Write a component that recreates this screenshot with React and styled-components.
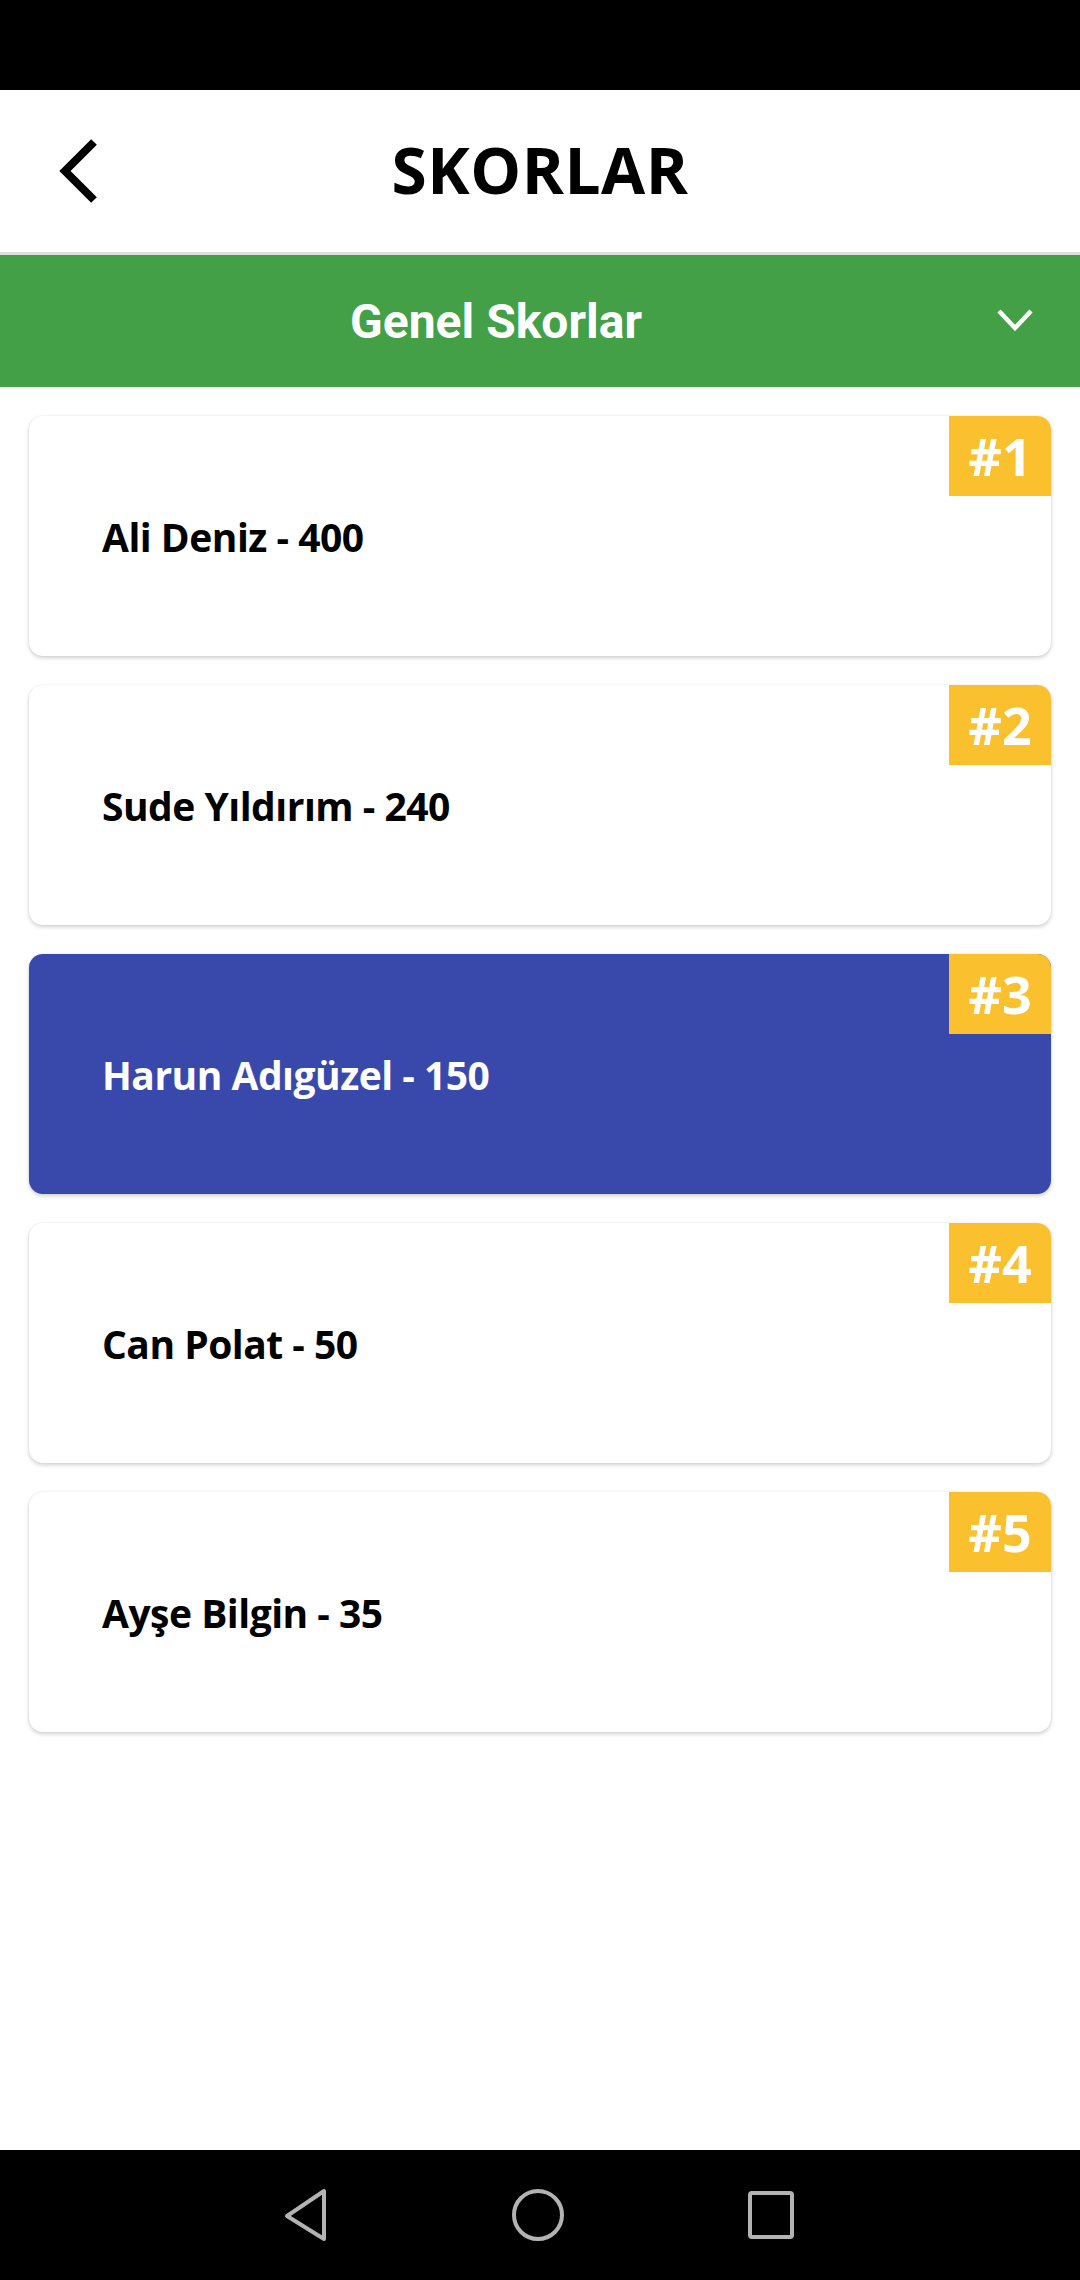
import React from 'react';
import styled, { createGlobalStyle } from 'styled-components';

const GlobalStyle = createGlobalStyle`
  html, body {
    margin: 0;
    padding: 0;
    background: #ffffff;
  }
`;

const Screen = styled.div`
  height: 100vh;
  display: flex;
  flex-direction: column;
  background: #ffffff;
`;

const StatusBar = styled.div`
  height: 90px;
  background: #000000;
  flex-shrink: 0;
`;

const Header = styled.header`
  height: 162px;
  display: grid;
  grid-template-columns: 150px 1fr 150px;
  align-items: center;
  background: #ffffff;
  border-bottom: 3px solid #dedede;
  flex-shrink: 0;
`;

const BackButton = styled.button`
  background: none;
  border: none;
  padding: 0 0 0 56px;
  display: flex;
  align-items: center;
  height: 100%;
`;

const Title = styled.h1`
  margin: 0;
  text-align: center;
  font-family: 'Open Sans', sans-serif;
  font-weight: 700;
  font-size: 64px;
  letter-spacing: 0.5px;
  color: #000000;
  padding-bottom: 4px;
`;

const Dropdown = styled.div`
  height: 132px;
  background: #43a047;
  display: flex;
  align-items: center;
  position: relative;
  flex-shrink: 0;
`;

const DropdownLabel = styled.span`
  flex: 1;
  text-align: center;
  padding-right: 88px;
  font-family: Roboto, sans-serif;
  font-weight: 700;
  font-size: 48px;
  color: #ffffff;
`;

const Chevron = styled.svg`
  position: absolute;
  right: 46px;
  top: 52px;
`;

const List = styled.main`
  flex: 1;
  display: flex;
  flex-direction: column;
  gap: 29px;
  padding: 29px 29px 0 29px;
`;

const Card = styled.div`
  position: relative;
  height: 240px;
  border-radius: 14px;
  background: ${(p) => (p.$active ? '#3949ab' : '#ffffff')};
  box-shadow: 0 2px 4px rgba(0, 0, 0, 0.18), 0 0 2px rgba(0, 0, 0, 0.08);
  display: flex;
  align-items: center;
  padding-left: 73px;
  overflow: hidden;
`;

const Name = styled.span`
  font-family: 'Open Sans', sans-serif;
  font-weight: 700;
  font-size: 39px;
  letter-spacing: -0.5px;
  color: ${(p) => (p.$active ? '#ffffff' : '#000000')};
`;

const Rank = styled.div`
  position: absolute;
  top: 0;
  right: 0;
  width: 102px;
  height: 80px;
  background: #fbc02d;
  display: flex;
  align-items: center;
  justify-content: center;
  font-family: 'Open Sans', sans-serif;
  font-weight: 700;
  font-size: 52px;
  color: #ffffff;
  padding-bottom: 2px;
  box-sizing: border-box;
`;

const NavBar = styled.nav`
  height: 130px;
  background: #000000;
  display: flex;
  align-items: center;
  justify-content: center;
  gap: 182px;
  flex-shrink: 0;
  padding-right: 3px;
`;

const scores = [
  { name: 'Ali Deniz', score: 400 },
  { name: 'Sude Yıldırım', score: 240 },
  { name: 'Harun Adıgüzel', score: 150, active: true },
  { name: 'Can Polat', score: 50 },
  { name: 'Ayşe Bilgin', score: 35 },
];

export default function App() {
  return (
    <Screen>
      <GlobalStyle />
      <StatusBar />
      <Header>
        <BackButton aria-label="Geri">
          <svg width="44" height="66" viewBox="0 0 44 66">
            <polyline
              points="38,4 9,33 38,62"
              fill="none"
              stroke="#000"
              strokeWidth="8"
              strokeLinecap="butt"
              strokeLinejoin="miter"
            />
          </svg>
        </BackButton>
        <Title>SKORLAR</Title>
        <div />
      </Header>
      <Dropdown>
        <DropdownLabel>Genel Skorlar</DropdownLabel>
        <Chevron width="38" height="26" viewBox="0 0 38 26">
          <polyline points="3,4 19,21 35,4" fill="none" stroke="#fff" strokeWidth="4.5" />
        </Chevron>
      </Dropdown>
      <List>
        {scores.map((s, i) => (
          <Card key={s.name} $active={s.active}>
            <Name $active={s.active}>
              {s.name} - {s.score}
            </Name>
            <Rank>#{i + 1}</Rank>
          </Card>
        ))}
      </List>
      <NavBar>
        <svg width="46" height="54" viewBox="0 0 46 54">
          <path
            d="M41 3 L41 51 L4 28 Z"
            fill="none"
            stroke="#b3b3b3"
            strokeWidth="4"
            strokeLinejoin="round"
          />
        </svg>
        <svg width="54" height="54" viewBox="0 0 54 54">
          <circle cx="27" cy="27" r="24" fill="none" stroke="#b3b3b3" strokeWidth="4" />
        </svg>
        <svg width="48" height="50" viewBox="0 0 48 50">
          <rect x="3" y="3" width="42" height="44" rx="2" fill="none" stroke="#b3b3b3" strokeWidth="4" />
        </svg>
      </NavBar>
    </Screen>
  );
}
